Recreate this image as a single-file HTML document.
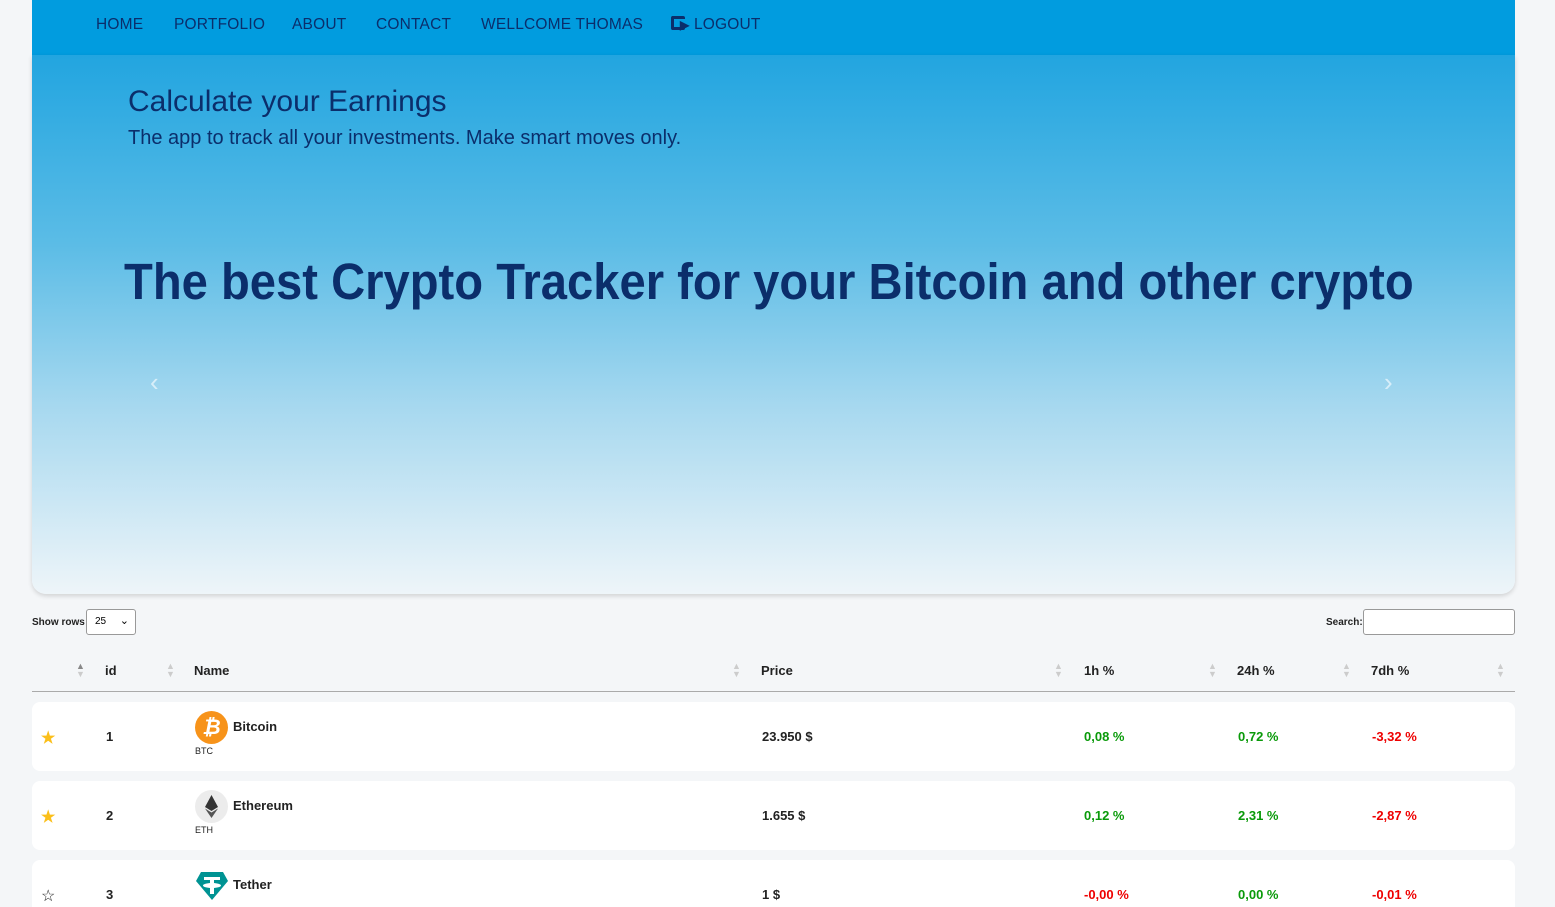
<!DOCTYPE html>
<html><head><meta charset="utf-8"><style>
*{box-sizing:border-box;margin:0;padding:0}
html,body{width:1555px;height:907px;overflow:hidden}
body{background:#f4f6f8;font-family:"Liberation Sans",sans-serif;position:relative}
.nav{position:absolute;left:32px;top:0;width:1483px;height:55px;background:#019cdf;}
.nav span{position:absolute;top:16px;font-size:15.5px;letter-spacing:.2px;color:#0b2e6b}
.hero{position:absolute;left:32px;top:55px;width:1483px;height:539px;border-radius:0 0 14px 14px;background:linear-gradient(#22a5e0 0%,#5bbce6 35%,#a6d8ef 65%,#eef5f9 100%);box-shadow:0 2px 5px rgba(0,0,0,.15)}
.h1{position:absolute;left:96px;top:30px;font-size:30px;color:#0b2e6b}
.sub{position:absolute;left:96px;top:72px;font-size:20px;color:#0b2e6b}
.big{position:absolute;left:92px;top:197px;font-size:51px;font-weight:bold;color:#0b2e6b;white-space:nowrap;transform:scaleX(.925);transform-origin:left}
.arr{position:absolute;top:312px;font-size:26px;color:#d8eef9}
.small{position:absolute;font-size:10px;font-weight:bold;color:#222}
.th{position:absolute;top:663px;font-size:13px;font-weight:bold;color:#222}
.sort{position:absolute;top:662px;font-size:9px;line-height:8px;color:#ccc}
.row{position:absolute;left:32px;width:1483px;height:69px;background:#fff;border-radius:8px}
.c{position:absolute;font-size:13px;font-weight:bold;color:#222}
.g{color:#0a9a0a}.r{color:#e00}
.sym{position:absolute;font-size:9px;color:#222}
</style></head><body>
<div class="nav">
<span style="left:64px">HOME</span><span style="left:142px">PORTFOLIO</span><span style="left:260px">ABOUT</span><span style="left:344px">CONTACT</span><span style="left:449px">WELLCOME THOMAS</span>
<span style="left:639px"><b style="display:inline-block;width:14px;height:14px;border:3px solid #0b2e6b;border-right:none;border-radius:2px;vertical-align:-1px"></b><b style="font-size:12px;margin-left:-5px">▶</b> LOGOUT</span>
</div>
<div class="hero">
<div class="h1">Calculate your Earnings</div>
<div class="sub">The app to track all your investments. Make smart moves only.</div>
<div class="big">The best Crypto Tracker for your Bitcoin and other crypto</div>
<div class="arr" style="left:118px">‹</div><div class="arr" style="left:1352px">›</div>
</div>
<div class="small" style="left:32px;top:617px">Show rows</div>
<div style="position:absolute;left:86px;top:609px;width:50px;height:26px;border:1px solid #999;border-radius:3px;background:#fff;font-size:10px;padding:6px 8px">25 <span style="position:absolute;right:6px;top:4px;font-size:11px">⌄</span></div>
<div class="small" style="left:1326px;top:617px">Search:</div>
<div style="position:absolute;left:1363px;top:609px;width:152px;height:26px;border:1px solid #999;border-radius:3px;background:#fff"></div>
<div class="sort" style="left:76px;color:#888">▲<br><span style="color:#ccc">▼</span></div>
<div class="th" style="left:105px">id</div><div class="sort" style="left:166px">▲<br>▼</div>
<div class="th" style="left:194px">Name</div><div class="sort" style="left:732px">▲<br>▼</div>
<div class="th" style="left:761px">Price</div><div class="sort" style="left:1054px">▲<br>▼</div>
<div class="th" style="left:1084px">1h %</div><div class="sort" style="left:1208px">▲<br>▼</div>
<div class="th" style="left:1237px">24h %</div><div class="sort" style="left:1342px">▲<br>▼</div>
<div class="th" style="left:1371px">7dh %</div><div class="sort" style="left:1496px">▲<br>▼</div>
<div style="position:absolute;left:32px;top:691px;width:1483px;height:1px;background:#aaa"></div>

<div class="row" style="top:702px"></div>
<div class="row" style="top:781px"></div>
<div class="row" style="top:860px"></div>

<div class="c" style="left:41px;top:728px;color:#fbbf1a;font-size:16px">★</div>
<div class="c" style="left:106px;top:729px">1</div>
<div style="position:absolute;left:195px;top:711px;width:33px;height:33px;border-radius:50%;background:#f7931a;color:#fff;font-weight:bold;font-size:21px;text-align:center;line-height:33px;font-style:italic">₿</div>
<div class="c" style="left:233px;top:719px">Bitcoin</div><div class="sym" style="left:195px;top:746px">BTC</div>
<div class="c" style="left:762px;top:729px">23.950 $</div>
<div class="c g" style="left:1084px;top:729px">0,08 %</div><div class="c g" style="left:1238px;top:729px">0,72 %</div><div class="c r" style="left:1372px;top:729px">-3,32 %</div>

<div class="c" style="left:41px;top:807px;color:#fbbf1a;font-size:16px">★</div>
<div class="c" style="left:106px;top:808px">2</div>
<div style="position:absolute;left:195px;top:790px;width:33px;height:33px;border-radius:50%;background:#ececec"><svg width="33" height="33" viewBox="0 0 33 33"><path d="M16.5 5 L10 17 L16.5 21 L23 17Z" fill="#343434"/><path d="M16.5 22.5 L10 18.5 L16.5 28 L23 18.5Z" fill="#555"/></svg></div>
<div class="c" style="left:233px;top:798px">Ethereum</div><div class="sym" style="left:195px;top:825px">ETH</div>
<div class="c" style="left:762px;top:808px">1.655 $</div>
<div class="c g" style="left:1084px;top:808px">0,12 %</div><div class="c g" style="left:1238px;top:808px">2,31 %</div><div class="c r" style="left:1372px;top:808px">-2,87 %</div>

<div class="c" style="left:41px;top:886px;font-size:16px;font-weight:normal">☆</div>
<div class="c" style="left:106px;top:887px">3</div>
<svg style="position:absolute;left:195px;top:871px" width="34" height="30" viewBox="0 0 34 30"><path d="M6 1 H28 L33 10 L17 29 L1 10Z" fill="#009393"/><path d="M9 6 H25 V9 H19 V12 C24 12.5 26 13.5 26 14.5 C26 15.5 24 16.5 19 17 V23 H15 V17 C10 16.5 8 15.5 8 14.5 C8 13.5 10 12.5 15 12 V9 H9Z" fill="#fff"/></svg>
<div class="c" style="left:233px;top:877px">Tether</div>
<div class="c" style="left:762px;top:887px">1 $</div>
<div class="c r" style="left:1084px;top:887px">-0,00 %</div><div class="c g" style="left:1238px;top:887px">0,00 %</div><div class="c r" style="left:1372px;top:887px">-0,01 %</div>
</body></html>
